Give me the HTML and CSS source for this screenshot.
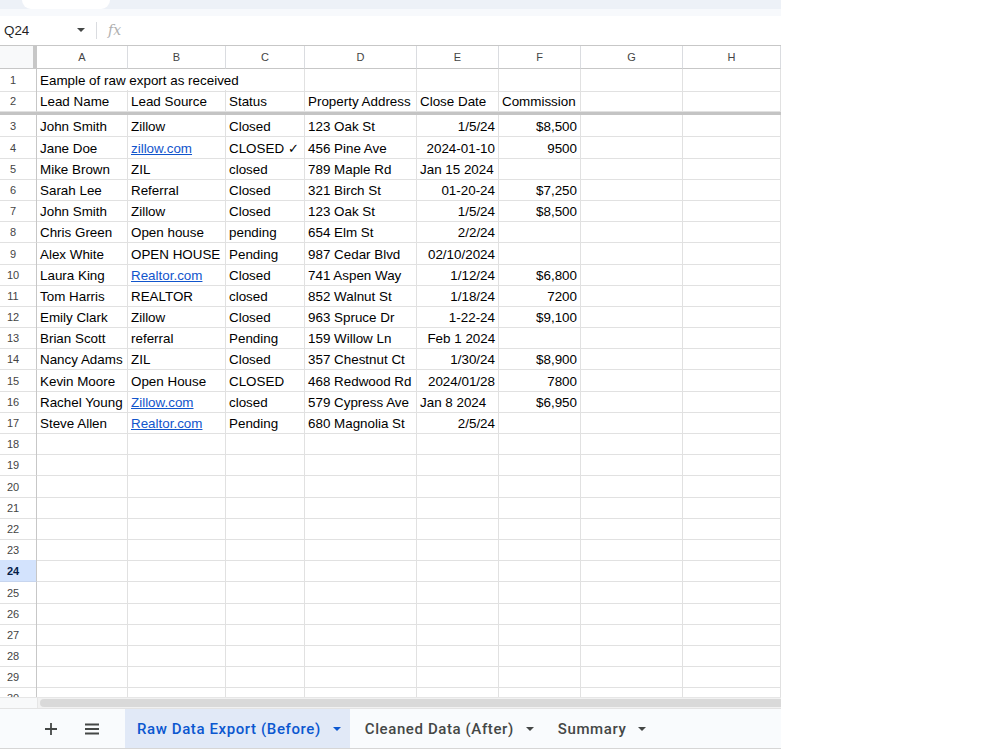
FILE: index.html
```html
<!DOCTYPE html>
<html>
<head>
<meta charset="utf-8">
<link rel="stylesheet" href="styles.css">
</head>
<body>
<div class="app">
  <div class="topstrip">
    <div class="topband"><div class="pill"></div></div>
    <div class="topband2"></div>
  </div>
  <div class="formulabar">
    <div class="namebox">Q24</div>
    <div class="nb-caret"></div>
    <div class="fsep"></div>
    <div class="fx">fx</div>
  </div>
  <div class="gridwrap">
    <div class="row hdr">
      <div class="corner"></div>
      <div class="ch">A</div><div class="ch">B</div><div class="ch">C</div><div class="ch">D</div>
      <div class="ch">E</div><div class="ch">F</div><div class="ch">G</div><div class="ch">H</div>
    </div>
    <div class="row">
      <div class="rh">1</div>
      <div class="c span3">Eample of raw export as received</div>
      <div class="c"></div><div class="c"></div><div class="c"></div><div class="c"></div><div class="c"></div>
    </div>
    <div class="row">
      <div class="rh">2</div>
      <div class="c">Lead Name</div><div class="c">Lead Source</div><div class="c">Status</div><div class="c">Property Address</div>
      <div class="c">Close Date</div><div class="c">Commission</div><div class="c"></div><div class="c"></div>
    </div>
    <div class="freeze"></div>
    <div class="row"><div class="rh">3</div><div class="c">John Smith</div><div class="c">Zillow</div><div class="c">Closed</div><div class="c">123 Oak St</div><div class="c r">1/5/24</div><div class="c r">$8,500</div><div class="c"></div><div class="c"></div></div>
    <div class="row"><div class="rh">4</div><div class="c">Jane Doe</div><div class="c"><span class="link">zillow.com</span></div><div class="c">CLOSED ✓</div><div class="c">456 Pine Ave</div><div class="c r">2024-01-10</div><div class="c r">9500</div><div class="c"></div><div class="c"></div></div>
    <div class="row"><div class="rh">5</div><div class="c">Mike Brown</div><div class="c">ZIL</div><div class="c">closed</div><div class="c">789 Maple Rd</div><div class="c">Jan 15 2024</div><div class="c r"></div><div class="c"></div><div class="c"></div></div>
    <div class="row"><div class="rh">6</div><div class="c">Sarah Lee</div><div class="c">Referral</div><div class="c">Closed</div><div class="c">321 Birch St</div><div class="c r">01-20-24</div><div class="c r">$7,250</div><div class="c"></div><div class="c"></div></div>
    <div class="row"><div class="rh">7</div><div class="c">John Smith</div><div class="c">Zillow</div><div class="c">Closed</div><div class="c">123 Oak St</div><div class="c r">1/5/24</div><div class="c r">$8,500</div><div class="c"></div><div class="c"></div></div>
    <div class="row"><div class="rh">8</div><div class="c">Chris Green</div><div class="c">Open house</div><div class="c">pending</div><div class="c">654 Elm St</div><div class="c r">2/2/24</div><div class="c r"></div><div class="c"></div><div class="c"></div></div>
    <div class="row"><div class="rh">9</div><div class="c">Alex White</div><div class="c">OPEN HOUSE</div><div class="c">Pending</div><div class="c">987 Cedar Blvd</div><div class="c r">02/10/2024</div><div class="c r"></div><div class="c"></div><div class="c"></div></div>
    <div class="row"><div class="rh">10</div><div class="c">Laura King</div><div class="c"><span class="link">Realtor.com</span></div><div class="c">Closed</div><div class="c">741 Aspen Way</div><div class="c r">1/12/24</div><div class="c r">$6,800</div><div class="c"></div><div class="c"></div></div>
    <div class="row"><div class="rh">11</div><div class="c">Tom Harris</div><div class="c">REALTOR</div><div class="c">closed</div><div class="c">852 Walnut St</div><div class="c r">1/18/24</div><div class="c r">7200</div><div class="c"></div><div class="c"></div></div>
    <div class="row"><div class="rh">12</div><div class="c">Emily Clark</div><div class="c">Zillow</div><div class="c">Closed</div><div class="c">963 Spruce Dr</div><div class="c r">1-22-24</div><div class="c r">$9,100</div><div class="c"></div><div class="c"></div></div>
    <div class="row"><div class="rh">13</div><div class="c">Brian Scott</div><div class="c">referral</div><div class="c">Pending</div><div class="c">159 Willow Ln</div><div class="c">&nbsp;&nbsp;Feb 1 2024</div><div class="c r"></div><div class="c"></div><div class="c"></div></div>
    <div class="row"><div class="rh">14</div><div class="c">Nancy Adams</div><div class="c">ZIL</div><div class="c">Closed</div><div class="c">357 Chestnut Ct</div><div class="c r">1/30/24</div><div class="c r">$8,900</div><div class="c"></div><div class="c"></div></div>
    <div class="row"><div class="rh">15</div><div class="c">Kevin Moore</div><div class="c">Open House</div><div class="c">CLOSED</div><div class="c">468 Redwood Rd</div><div class="c r">2024/01/28</div><div class="c r">7800</div><div class="c"></div><div class="c"></div></div>
    <div class="row"><div class="rh">16</div><div class="c">Rachel Young</div><div class="c"><span class="link">Zillow.com</span></div><div class="c">closed</div><div class="c">579 Cypress Ave</div><div class="c">Jan 8 2024</div><div class="c r">$6,950</div><div class="c"></div><div class="c"></div></div>
    <div class="row"><div class="rh">17</div><div class="c">Steve Allen</div><div class="c"><span class="link">Realtor.com</span></div><div class="c">Pending</div><div class="c">680 Magnolia St</div><div class="c r">2/5/24</div><div class="c r"></div><div class="c"></div><div class="c"></div></div>
    <div class="row"><div class="rh">18</div><div class="c"></div><div class="c"></div><div class="c"></div><div class="c"></div><div class="c"></div><div class="c"></div><div class="c"></div><div class="c"></div></div>
    <div class="row"><div class="rh">19</div><div class="c"></div><div class="c"></div><div class="c"></div><div class="c"></div><div class="c"></div><div class="c"></div><div class="c"></div><div class="c"></div></div>
    <div class="row"><div class="rh">20</div><div class="c"></div><div class="c"></div><div class="c"></div><div class="c"></div><div class="c"></div><div class="c"></div><div class="c"></div><div class="c"></div></div>
    <div class="row"><div class="rh">21</div><div class="c"></div><div class="c"></div><div class="c"></div><div class="c"></div><div class="c"></div><div class="c"></div><div class="c"></div><div class="c"></div></div>
    <div class="row"><div class="rh">22</div><div class="c"></div><div class="c"></div><div class="c"></div><div class="c"></div><div class="c"></div><div class="c"></div><div class="c"></div><div class="c"></div></div>
    <div class="row"><div class="rh">23</div><div class="c"></div><div class="c"></div><div class="c"></div><div class="c"></div><div class="c"></div><div class="c"></div><div class="c"></div><div class="c"></div></div>
    <div class="row"><div class="rh sel">24</div><div class="c"></div><div class="c"></div><div class="c"></div><div class="c"></div><div class="c"></div><div class="c"></div><div class="c"></div><div class="c"></div></div>
    <div class="row"><div class="rh">25</div><div class="c"></div><div class="c"></div><div class="c"></div><div class="c"></div><div class="c"></div><div class="c"></div><div class="c"></div><div class="c"></div></div>
    <div class="row"><div class="rh">26</div><div class="c"></div><div class="c"></div><div class="c"></div><div class="c"></div><div class="c"></div><div class="c"></div><div class="c"></div><div class="c"></div></div>
    <div class="row"><div class="rh">27</div><div class="c"></div><div class="c"></div><div class="c"></div><div class="c"></div><div class="c"></div><div class="c"></div><div class="c"></div><div class="c"></div></div>
    <div class="row"><div class="rh">28</div><div class="c"></div><div class="c"></div><div class="c"></div><div class="c"></div><div class="c"></div><div class="c"></div><div class="c"></div><div class="c"></div></div>
    <div class="row"><div class="rh">29</div><div class="c"></div><div class="c"></div><div class="c"></div><div class="c"></div><div class="c"></div><div class="c"></div><div class="c"></div><div class="c"></div></div>
    <div class="row"><div class="rh">30</div><div class="c"></div><div class="c"></div><div class="c"></div><div class="c"></div><div class="c"></div><div class="c"></div><div class="c"></div><div class="c"></div></div>
  </div>
  <div class="hscroll">
    <div class="hs-left"></div>
    <div class="hs-track"><div class="hs-thumb"></div></div>
  </div>
  <div class="tabbar">
    <div class="tb-icon plus">
      <svg width="14" height="14" viewBox="0 0 14 14"><path d="M7 1v12M1 7h12" stroke="#444746" stroke-width="1.8" fill="none"/></svg>
    </div>
    <div class="tb-icon menu">
      <svg width="16" height="12" viewBox="0 0 16 12"><path d="M1 1.5h14M1 6h14M1 10.5h14" stroke="#444746" stroke-width="1.8" fill="none"/></svg>
    </div>
    <div class="tab active"><span>Raw Data Export (Before)</span><i class="tcaret"></i></div>
    <div class="tab"><span>Cleaned Data (After)</span><i class="tcaret"></i></div>
    <div class="tab"><span>Summary</span><i class="tcaret"></i></div>
  </div>
</div>
</body>
</html>
```

FILE: styles.css
```css
* { box-sizing: border-box; }
html, body { margin: 0; padding: 0; background: #fff; }
body { font-family: "Liberation Sans", Arial, sans-serif; color: #000; }

.app { width: 781px; height: 750px; display: flex; flex-direction: column; background: #fff; }

.topstrip { height: 16px; flex: none; display: flex; flex-direction: column; }
.topband { height: 9px; background: #edf1f7; padding-left: 22px; }
.pill { width: 88px; height: 9px; background: #fff; border-radius: 0 0 10px 10px; }
.topband2 { height: 7px; background: #f7f9fc; }

.formulabar { height: 30px; flex: none; display: flex; align-items: center; border-bottom: 1px solid #c7c7c7; padding-bottom: 1px; }
.namebox { font-size: 13.4px; color: #1f1f1f; padding-left: 4px; width: 77px; }
.nb-caret { width: 0; height: 0; border-left: 4px solid transparent; border-right: 4px solid transparent; border-top: 4px solid #444746; margin-right: 11px; }
.fsep { width: 1px; height: 17px; background: #dadce0; margin-right: 11px; }
.fx { font-family: "DejaVu Serif", serif; font-style: italic; font-size: 14px; color: #b0b0b0; }

.gridwrap { height: 651px; flex: none; overflow: hidden; }
.row { display: grid; grid-template-columns: 37px 91px 98px 79px 112px 82px 82px 102px 98px; height: 21.2px; }
.row.hdr { height: 23px; }
.corner { border-right: 4px solid #c7c7c7; border-bottom: 1px solid #c7c7c7; background: #f8f9fa; }
.ch { border-right: 1px solid #dadce0; border-bottom: 1px solid #c7c7c7; font-size: 11px; color: #444; text-align: center; line-height: 22px; }
.rh { border-right: 1px solid #c7c7c7; border-bottom: 1px solid #e1e1e1; font-size: 11px; color: #444; text-align: center; padding: 1px 10px 0 0; line-height: 20px; }
.rh.sel { background: #d3e3fd; font-weight: bold; color: #041e49; border-bottom-color: #c7d5ee; }
.c { border-right: 1px solid #e1e1e1; border-bottom: 1px solid #e1e1e1; font-size: 13.4px; line-height: 20px; padding: 2px 3px 0; white-space: nowrap; overflow: hidden; color: #000; }
.c.r { text-align: right; }
.c.span3 { grid-column: span 3; overflow: visible; }
.link { color: #1155cc; text-decoration: underline; }
.freeze { height: 4px; background: #c4c4c4; }

.hscroll { height: 11px; flex: none; display: flex; background: #f1f1f1; border-top: 1px solid #e6e6e6; }
.hs-left { width: 38px; border-right: 1px solid #e6e6e6; background: #f8f9fa; }
.hs-track { flex: 1; padding: 1px 0 1px 2px; }
.hs-thumb { height: 8px; background: #d9d9d9; border-radius: 4px 0 0 4px; }

.tabbar { height: 41px; flex: none; display: flex; align-items: stretch; background: #f9fbfd; border-top: 1px solid #e3e3e3; border-bottom: 1px solid #d6d6d6; }
.tb-icon { display: flex; align-items: center; justify-content: center; }
.tb-icon.plus { width: 30px; margin-left: 36px; }
.tb-icon.menu { width: 30px; margin-left: 11px; margin-right: 18px; }
.tab { display: flex; align-items: center; padding: 0 9px 0 15px; font-family: Roboto, "Noto Sans", sans-serif; font-weight: 500; font-size: 15px; color: #444746; letter-spacing: 0.6px; }
.tab span { margin-right: 12px; }
.tab.active { background: #e1e9f7; color: #0b57d0; padding-left: 12px; }
.tcaret { width: 0; height: 0; border-left: 4px solid transparent; border-right: 4px solid transparent; border-top: 4px solid currentColor; }
.tab:not(.active) .tcaret { border-top-color: #444746; }
```
